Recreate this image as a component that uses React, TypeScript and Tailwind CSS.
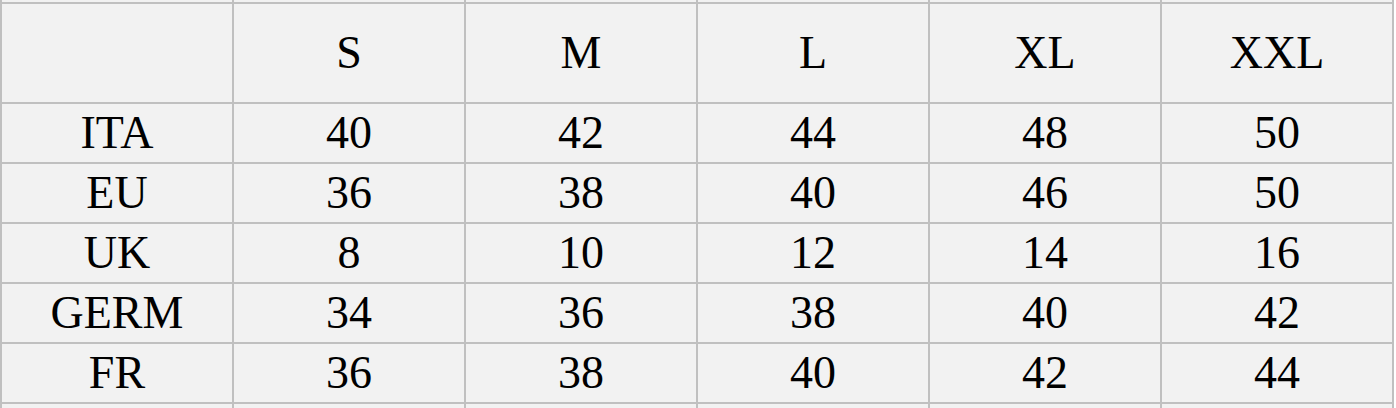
const sizes = ['S', 'M', 'L', 'XL', 'XXL'];

const rows: { label: string; values: string[] }[] = [
  { label: 'ITA', values: ['40', '42', '44', '48', '50'] },
  { label: 'EU', values: ['36', '38', '40', '46', '50'] },
  { label: 'UK', values: ['8', '10', '12', '14', '16'] },
  { label: 'GERM', values: ['34', '36', '38', '40', '42'] },
  { label: 'FR', values: ['36', '38', '40', '42', '44'] },
];

function Cell({ children, tall }: { children?: React.ReactNode; tall?: boolean }) {
  return (
    <div
      className={`bg-[#f2f2f2] flex items-center justify-center text-black text-[46px] leading-none ${
        tall ? 'h-[98px]' : 'h-[58px]'
      }`}
    >
      {children}
    </div>
  );
}

export default function App() {
  return (
    <div className="h-[408px] w-[1396px] overflow-hidden bg-white font-['Liberation_Serif',serif]">
      <div className="-mt-[58px] grid w-fit grid-cols-[repeat(6,230px)] gap-[2px] bg-[#c0c0c0] p-[2px]">
        {/* row above, scrolled out of view */}
        {Array.from({ length: 6 }).map((_, i) => (
          <Cell key={`top-${i}`} />
        ))}

        <Cell tall />
        {sizes.map((s) => (
          <Cell key={s} tall>
            {s}
          </Cell>
        ))}

        {rows.map((row) => (
          <div key={row.label} className="contents">
            <Cell>{row.label}</Cell>
            {row.values.map((v, i) => (
              <Cell key={i}>{v}</Cell>
            ))}
          </div>
        ))}

        {Array.from({ length: 6 }).map((_, i) => (
          <Cell key={`bottom-${i}`} />
        ))}
      </div>
    </div>
  );
}
